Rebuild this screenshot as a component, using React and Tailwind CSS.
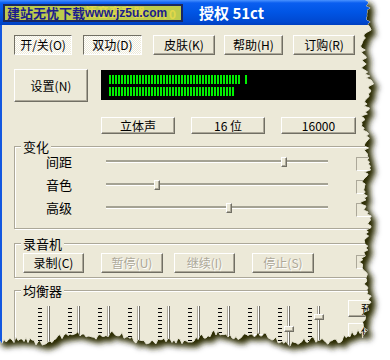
import React from "react";

const raised =
  "border border-white border-r-[#716f64] border-b-[#716f64] shadow-[inset_-1px_-1px_0_#aca899] bg-[#ece9d8]";
const pressed =
  "border border-[#716f64] border-r-white border-b-white bg-[repeating-conic-gradient(#ffffff_0_25%,#ece9d8_0_50%)] bg-[length:2px_2px]";

function Btn({ className = "", down, disabled, children }) {
  return (
    <div
      className={`flex shrink-0 items-center justify-center whitespace-nowrap ${down ? pressed : raised} ${
        disabled ? "text-[#aca899] [text-shadow:1px_1px_0_#fff]" : "text-black"
      } ${className}`}
    >
      {children}
    </div>
  );
}

function SmallBox({ className = "" }) {
  return (
    <div
      className={`h-[14px] w-[18px] shrink-0 border border-[#aca899] border-r-white border-b-white ${className}`}
    />
  );
}

function Group({ title, className = "", children }) {
  return (
    <div
      className={`w-[366px] border border-[#aca899] shadow-[1px_1px_0_#fff,inset_1px_1px_0_#fff] ${className}`}
    >
      <div className="-mt-[7px] ml-[6px] w-fit bg-[#ece9d8] px-[2px] text-[13px] leading-[14px]">
        {title}
      </div>
      {children}
    </div>
  );
}

function SliderRow({ label, pos }) {
  return (
    <div className="flex h-[23px] items-center pl-[31px]">
      <span className="w-[60px] text-[13px] leading-none">{label}</span>
      <div className="relative h-[3px] w-[222px] border-t-[2px] border-[#a4a293] border-b border-b-white">
        <div
          className={`absolute top-[-5px] h-[10px] w-[6px] ${raised}`}
          style={{ left: pos }}
        />
      </div>
      <SmallBox className="ml-[28px] mt-[4px]" />
    </div>
  );
}

const eqThumbs = [null, null, null, null, null, null, null, 28, 20, 8];

function EqColumn({ thumb }) {
  return (
    <div className="flex w-[30px] shrink-0">
      <div className="mt-[8px] flex w-[4px] flex-col gap-[3px]">
        {Array.from({ length: 12 }).map((_, i) => (
          <div key={i} className="h-px w-[4px] bg-black" />
        ))}
      </div>
      <div className="relative ml-[5px] mt-[6px] h-[60px] w-[3px] border-l border-[#aca899] border-r border-r-[#716f64] bg-white">
        {thumb !== null && (
          <div
            className={`absolute left-[-4px] h-[6px] w-[10px] ${raised}`}
            style={{ top: thumb }}
          />
        )}
      </div>
    </div>
  );
}

// torn paper edge
function makeEdge() {
  let s = 11;
  const r = () => {
    s = (s * 16807) % 2147483647;
    return s / 2147483647;
  };
  const pts = [[-2, -2]];
  let lastX = 366;
  for (let y = 0; y <= 338; y += 2) {
    lastX =
      366 +
      3 * Math.sin(y * 0.09) +
      2 * Math.sin(y * 0.23 + 1.3) +
      (r() - 0.5) * 6;
    pts.push([lastX, y]);
  }
  for (let x = Math.floor(lastX); x >= -2; x -= 2) {
    pts.push([
      x,
      338 +
        4 * Math.sin(x * 0.045 + 0.5) +
        2.5 * Math.sin(x * 0.13 + 2) +
        (r() - 0.5) * 6,
    ]);
  }
  return "M" + pts.map((p) => p[0].toFixed(1) + "," + p[1].toFixed(1)).join("L") + "Z";
}
const EDGE = makeEdge();

function Tear() {
  return (
    <svg className="pointer-events-none absolute inset-0" width="390" height="360">
      <defs>
        <filter id="shadowBlur" x="-20%" y="-20%" width="140%" height="140%">
          <feGaussianBlur stdDeviation="3" />
        </filter>
        <mask id="outside">
          <rect width="390" height="360" fill="white" />
          <path d={EDGE} fill="black" />
        </mask>
      </defs>
      <g mask="url(#outside)">
        <rect width="390" height="360" fill="white" />
        <path d={EDGE} transform="translate(5,5)" fill="#2a2a04" filter="url(#shadowBlur)" />
        <path d={EDGE} transform="translate(3,3)" fill="#2a2a04" filter="url(#shadowBlur)" opacity="0.8" />
        <path d={EDGE} fill="none" stroke="#d8d6c8" strokeWidth="1" />
      </g>
    </svg>
  );
}

export default function App() {
  return (
    <div className="relative h-[360px] w-[390px] overflow-hidden bg-white font-['Noto_Sans_CJK_SC',sans-serif] text-[12px] text-black">
      <div className="flex h-full w-full flex-col bg-[#ece9d8]">
        {/* title bar */}
        <div className="flex h-[25px] shrink-0 items-center bg-[linear-gradient(180deg,#4a92ff_0px,#0a5ef0_3px,#0055e5_12px,#0048d0_22px,#003fbf_25px)] pl-[3px]">
          <div className="relative h-[18px] w-[180px] overflow-hidden border-2 border-[#1a2760] bg-[#bccb4c]">
            <div className="flex h-full items-start pl-[80px] text-[12px] font-bold leading-[12px] text-[#e2d84a]">
              <span>语音变声器</span>
              <span className="ml-[9px] mt-[2px] tracking-[2px]">3.0</span>
            </div>
            <div className="absolute inset-0 flex items-center pl-[2px] leading-none text-[#1b1c8c]">
              <span className="text-[13px] font-bold">建站无忧下载</span>
              <span className="font-['Liberation_Sans',sans-serif] text-[12px] font-bold">www.jz5u.com</span>
            </div>
          </div>
          <div className="ml-[16px] text-[15px] font-bold leading-none text-white">
            授权 51ct
          </div>
        </div>

        {/* body */}
        <div className="flex flex-1 flex-col border-l-[2px] border-[#1458e0] pl-[12px] pt-[10px]">
          <div className="flex">
            <Btn down className="h-[20px] w-[58px]">开/关(O)</Btn>
            <Btn down className="ml-[11px] h-[20px] w-[59px]">双功(D)</Btn>
            <Btn className="ml-[11px] h-[20px] w-[62px]">皮肤(K)</Btn>
            <Btn className="ml-[9px] h-[20px] w-[59px]">帮助(H)</Btn>
            <Btn className="ml-[10px] h-[20px] w-[62px]">订购(R)</Btn>
          </div>

          <div className="mt-[14px] flex items-start">
            <Btn className="h-[33px] w-[74px]">设置(N)</Btn>
            <div className="ml-[13px] mt-[1px] h-[30px] w-[255px] bg-black pl-[8px] pt-[5px]">
              <div className="flex h-[9px]">
                <div className="h-[9px] w-[131px] bg-[repeating-linear-gradient(90deg,#00f000_0_2px,transparent_2px_3px)]" />
                <div className="ml-[5px] h-[9px] w-[2px] bg-[#00f000]" />
              </div>
              <div className="mt-[3px] h-[9px] w-[125px] bg-[repeating-linear-gradient(90deg,#00f000_0_2px,transparent_2px_3px)]" />
            </div>
          </div>

          <div className="mt-[15px] flex pl-[87px]">
            <Btn className="h-[17px] w-[74px]">立体声</Btn>
            <Btn className="ml-[16px] h-[17px] w-[74px]">16 位</Btn>
            <Btn className="ml-[16px] h-[17px] w-[75px]">16000</Btn>
          </div>

          <Group title="变化" className="mt-[12px] pb-[9px]">
            <div className="-mt-[4px]">
              <SliderRow label="间距" pos={175} />
              <SliderRow label="音色" pos={48} />
              <SliderRow label="高级" pos={120} />
            </div>
          </Group>

          <Group title="录音机" className="mt-[14px] pb-[4px]">
            <div className="mt-[2px] flex items-start pl-[8px]">
              <Btn className="h-[20px] w-[61px]">录制(C)</Btn>
              <Btn disabled className="ml-[17px] h-[20px] w-[62px]">暂停(U)</Btn>
              <Btn disabled className="ml-[11px] h-[20px] w-[61px]">继续(I)</Btn>
              <Btn disabled className="ml-[17px] h-[20px] w-[62px]">停止(S)</Btn>
              <SmallBox className="ml-[42px] mt-[2px]" />
            </div>
          </Group>

          <Group title="均衡器" className="mt-[12px] flex-1 border-b-0">
            <div className="mt-[2px] flex items-start pl-[23px]">
              {eqThumbs.map((t, i) => (
                <EqColumn key={i} thumb={t} />
              ))}
              <div className="ml-[10px] flex flex-col gap-[6px]">
                <Btn className="h-[17px] w-[40px] justify-start pl-[12px]">预置</Btn>
                <Btn className="h-[17px] w-[40px] justify-start pl-[12px]">保存</Btn>
              </div>
            </div>
          </Group>
        </div>
      </div>
      <Tear />
    </div>
  );
}
